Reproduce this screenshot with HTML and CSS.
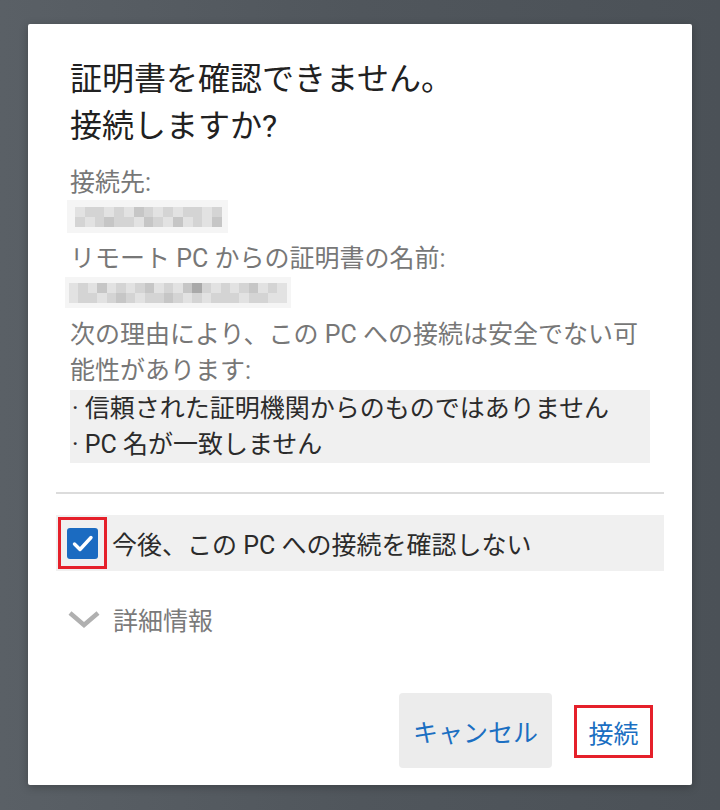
FILE: index.html
```html
<!DOCTYPE html>
<html lang="ja">
<head>
    <meta charset="UTF-8">
    <meta name="viewport" content="width=device-width, initial-scale=1.0">
    <title>証明書を確認できません</title>
    <link rel="stylesheet" href="styles.css">
</head>
<body>
    <div class="dialog">
        <h1 class="title">証明書を確認できません。<br>接続しますか?</h1>

        <div class="label first">接続先:</div>
        <div class="blur short">
            <i class="a"></i><i class="b"></i><i class="b"></i><i class="a"></i><i class="b"></i><i class="a"></i><i class="c"></i><i class="b"></i><i class="a"></i><i class="b"></i><i class="a"></i><i class="b"></i><i class="b"></i><i class="a"></i><i class="b"></i>
            <i class="b"></i><i class="a"></i><i class="b"></i><i class="c"></i><i class="b"></i><i class="b"></i><i class="a"></i><i class="c"></i><i class="b"></i><i class="a"></i><i class="c"></i><i class="a"></i><i class="b"></i><i class="a"></i><i class="c"></i>
        </div>

        <div class="label">リモート PC からの証明書の名前:</div>
        <div class="blur long">
            <i class="a"></i><i class="b"></i><i class="a"></i><i class="c"></i><i class="a"></i><i class="b"></i><i class="a"></i><i class="b"></i><i class="c"></i><i class="a"></i><i class="b"></i><i class="a"></i><i class="c"></i><i class="d"></i><i class="b"></i><i class="a"></i><i class="b"></i><i class="a"></i><i class="b"></i><i class="c"></i><i class="a"></i><i class="b"></i><i class="a"></i>
            <i class="a"></i><i class="b"></i><i class="b"></i><i class="a"></i><i class="b"></i><i class="c"></i><i class="b"></i><i class="a"></i><i class="b"></i><i class="b"></i><i class="c"></i><i class="b"></i><i class="a"></i><i class="b"></i><i class="a"></i><i class="b"></i><i class="b"></i><i class="b"></i><i class="a"></i><i class="b"></i><i class="b"></i><i class="a"></i><i class="a"></i>
        </div>

        <p class="label reason">次の理由により、この PC への接続は安全でない可能性があります:</p>
        <div class="reasons">
            <div>· 信頼された証明機関からのものではありません</div>
            <div>· PC 名が一致しません</div>
        </div>

        <hr class="divider">

        <label class="check-row">
            <span class="mark">
                <span class="box">
                    <svg width="31" height="31" viewBox="0 0 31 31">
                        <path d="M7.5 16 L13 21.5 L24 9.5" fill="none" stroke="#fff" stroke-width="3.4" stroke-linecap="round" stroke-linejoin="round"/>
                    </svg>
                </span>
            </span>
            <span class="check-text">今後、この PC への接続を確認しない</span>
        </label>

        <div class="details">
            <svg width="34" height="18" viewBox="0 0 34 18">
                <path d="M3 3 L17 15 L31 3" fill="none" stroke="#b0b0b0" stroke-width="4.5"/>
            </svg>
            <span>詳細情報</span>
        </div>

        <div class="actions">
            <button class="btn cancel">キャンセル</button>
            <button class="btn connect">接続</button>
        </div>
    </div>
</body>
</html>
```

FILE: styles.css
```css
body {
    margin: 0;
    height: 810px;
    background: linear-gradient(90deg, #5a6066 0%, #50565c 50%, #4b5157 100%);
    font-family: Roboto, "Noto Sans CJK JP", sans-serif;
    overflow: hidden;
}
.dialog {
    box-sizing: border-box;
    width: 664px;
    height: 761px;
    margin: 24px 0 0 28px;
    padding: 32px 42px 17px;
    background: #fff;
    border-radius: 2px;
    box-shadow: 0 2px 8px rgba(0, 0, 0, 0.25);
    display: flex;
    flex-direction: column;
}
.title {
    margin: 0;
    font-size: 32px;
    font-weight: normal;
    line-height: 47px;
    color: #212121;
}
.label {
    margin: 8px 0 0;
    font-size: 25px;
    line-height: 36px;
    color: #777;
}
.label.first {
    margin-top: 15px;
}
.label.reason {
    margin-top: 9px;
}
.blur {
    display: flex;
    flex-wrap: wrap;
    align-content: center;
    background: #f5f5f5;
    margin-left: -3px;
    padding: 0 4px 0 8px;
}
.blur.short {
    width: 149px;
    height: 33px;
    margin-top: -1px;
}
.blur.long {
    width: 218px;
    height: 31px;
    margin-top: 0;
    padding-left: 4px;
    margin-left: -5px;
}
.blur i {
    width: 10px;
    height: 10px;
}
.blur.short i { width: 9.8px; }
.blur.long i { width: 9.47px; }
.blur .a { background: #e2e2e2; }
.blur .b { background: #d4d4d4; }
.blur .c { background: #c6c6c6; }
.blur .d { background: #a9a9a9; }
.reasons {
    margin-top: 1px;
    height: 73px;
    box-sizing: border-box;
    padding-top: 1px;
    background: #f0f0f0;
    font-size: 25px;
    line-height: 36px;
    color: #2b2b2b;
}
.reasons div {
    padding-left: 2px;
}
.divider {
    margin: 29px -14px 0;
    border: none;
    height: 2px;
    background: #dcdcdc;
}
.check-row {
    display: flex;
    align-items: center;
    margin: 21px -14px 0;
    height: 56px;
    padding-left: 2px;
    background: #f0f0f0;
}
.mark {
    box-sizing: border-box;
    width: 49px;
    height: 52px;
    border: 3px solid #e5202a;
    display: flex;
    align-items: center;
    justify-content: center;
}
.box {
    width: 31px;
    height: 31px;
    border-radius: 3px;
    background: #1b6bc1;
    display: flex;
}
.check-text {
    margin-left: 5px;
    font-size: 25px;
    color: #2b2b2b;
}
.details {
    display: flex;
    align-items: center;
    margin-top: 30px;
    height: 36px;
    margin-left: -3px;
    font-size: 25px;
    color: #7a7a7a;
}
.details span {
    margin-left: 12px;
}
.actions {
    margin-top: auto;
    margin-right: -3px;
    display: flex;
    justify-content: flex-end;
    align-items: center;
    gap: 22px;
}
.btn {
    font-family: inherit;
    font-size: 25px;
    color: #1b6fc2;
    background: none;
    border: none;
    cursor: pointer;
}
.cancel {
    width: 153px;
    height: 75px;
    background: #ececec;
    border-radius: 4px;
}
.connect {
    width: 79px;
    height: 53px;
    border: 3px solid #e5202a;
    margin-top: 2px;
}
```
